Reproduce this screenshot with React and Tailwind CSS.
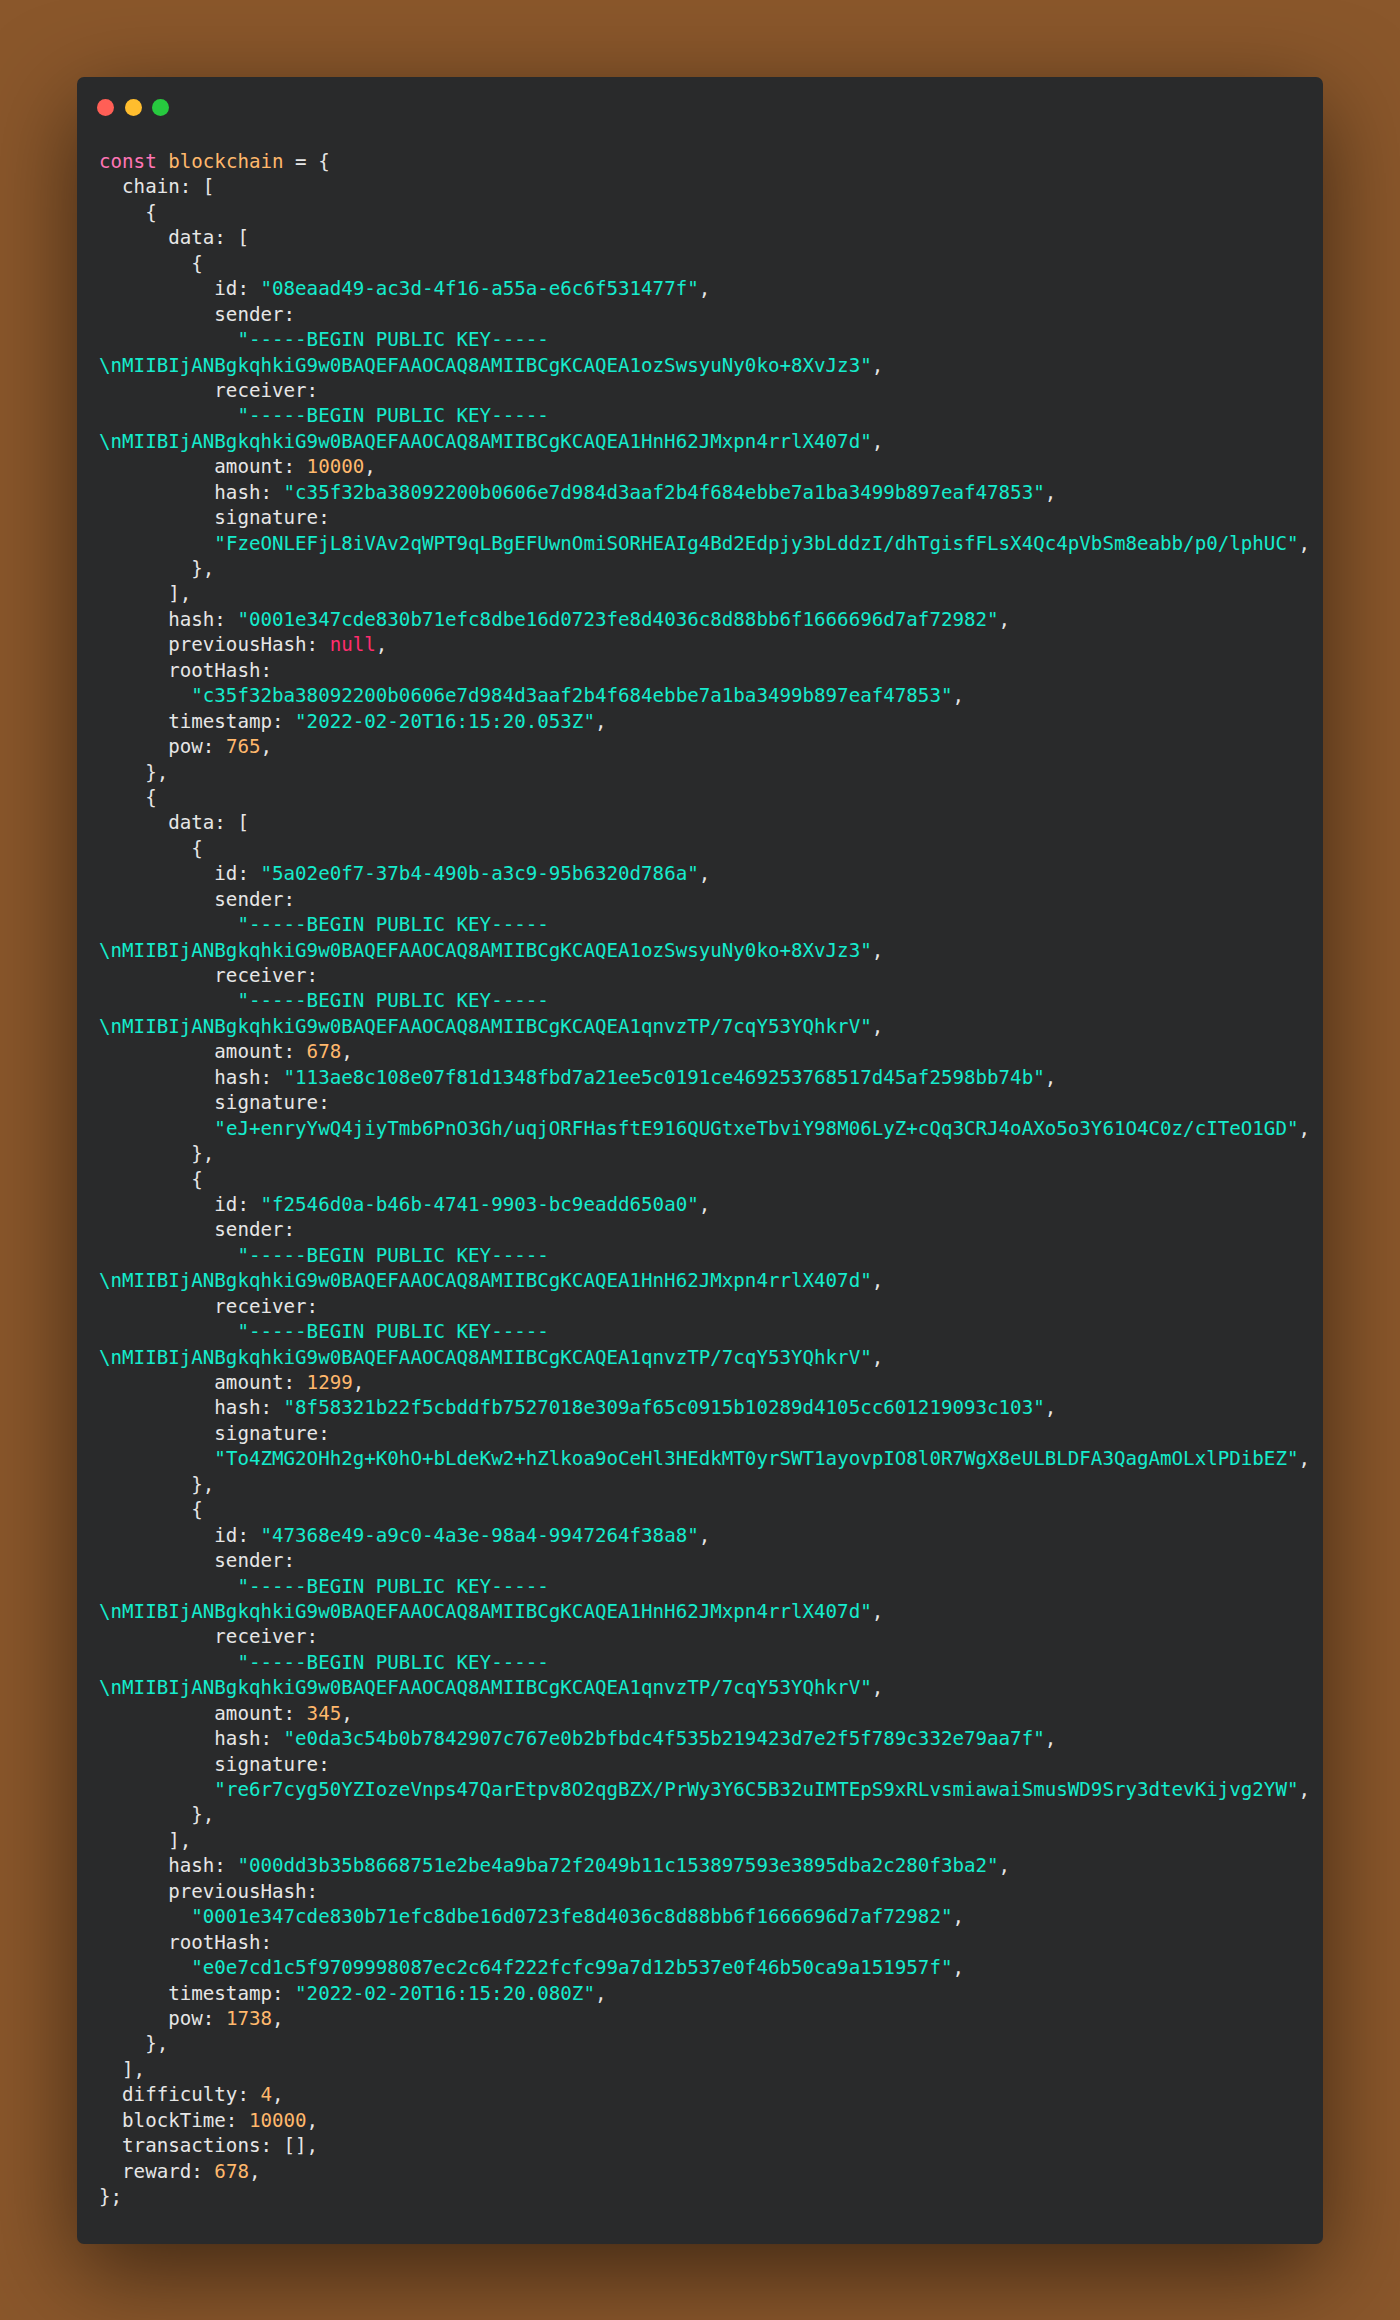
const KEY_A = String.raw`\nMIIBIjANBgkqhkiG9w0BAQEFAAOCAQ8AMIIBCgKCAQEA1ozSwsyuNy0ko+8XvJz3",`
const KEY_B = String.raw`\nMIIBIjANBgkqhkiG9w0BAQEFAAOCAQ8AMIIBCgKCAQEA1HnH62JMxpn4rrlX407d",`
const KEY_C = String.raw`\nMIIBIjANBgkqhkiG9w0BAQEFAAOCAQ8AMIIBCgKCAQEA1qnvzTP/7cqY53YQhkrV",`
const BEGIN = '            "-----BEGIN PUBLIC KEY-----'

const CODE = [
  'const blockchain = {',
  '  chain: [',
  '    {',
  '      data: [',
  '        {',
  '          id: "08eaad49-ac3d-4f16-a55a-e6c6f531477f",',
  '          sender:',
  BEGIN,
  KEY_A,
  '          receiver:',
  BEGIN,
  KEY_B,
  '          amount: 10000,',
  '          hash: "c35f32ba38092200b0606e7d984d3aaf2b4f684ebbe7a1ba3499b897eaf47853",',
  '          signature:',
  '          "FzeONLEFjL8iVAv2qWPT9qLBgEFUwnOmiSORHEAIg4Bd2Edpjy3bLddzI/dhTgisfFLsX4Qc4pVbSm8eabb/p0/lphUC",',
  '        },',
  '      ],',
  '      hash: "0001e347cde830b71efc8dbe16d0723fe8d4036c8d88bb6f1666696d7af72982",',
  '      previousHash: null,',
  '      rootHash:',
  '        "c35f32ba38092200b0606e7d984d3aaf2b4f684ebbe7a1ba3499b897eaf47853",',
  '      timestamp: "2022-02-20T16:15:20.053Z",',
  '      pow: 765,',
  '    },',
  '    {',
  '      data: [',
  '        {',
  '          id: "5a02e0f7-37b4-490b-a3c9-95b6320d786a",',
  '          sender:',
  BEGIN,
  KEY_A,
  '          receiver:',
  BEGIN,
  KEY_C,
  '          amount: 678,',
  '          hash: "113ae8c108e07f81d1348fbd7a21ee5c0191ce469253768517d45af2598bb74b",',
  '          signature:',
  '          "eJ+enryYwQ4jiyTmb6PnO3Gh/uqjORFHasftE916QUGtxeTbviY98M06LyZ+cQq3CRJ4oAXo5o3Y61O4C0z/cITeO1GD",',
  '        },',
  '        {',
  '          id: "f2546d0a-b46b-4741-9903-bc9eadd650a0",',
  '          sender:',
  BEGIN,
  KEY_B,
  '          receiver:',
  BEGIN,
  KEY_C,
  '          amount: 1299,',
  '          hash: "8f58321b22f5cbddfb7527018e309af65c0915b10289d4105cc601219093c103",',
  '          signature:',
  '          "To4ZMG2OHh2g+K0hO+bLdeKw2+hZlkoa9oCeHl3HEdkMT0yrSWT1ayovpIO8l0R7WgX8eULBLDFA3QagAmOLxlPDibEZ",',
  '        },',
  '        {',
  '          id: "47368e49-a9c0-4a3e-98a4-9947264f38a8",',
  '          sender:',
  BEGIN,
  KEY_B,
  '          receiver:',
  BEGIN,
  KEY_C,
  '          amount: 345,',
  '          hash: "e0da3c54b0b7842907c767e0b2bfbdc4f535b219423d7e2f5f789c332e79aa7f",',
  '          signature:',
  '          "re6r7cyg50YZIozeVnps47QarEtpv8O2qgBZX/PrWy3Y6C5B32uIMTEpS9xRLvsmiawaiSmusWD9Sry3dtevKijvg2YW",',
  '        },',
  '      ],',
  '      hash: "000dd3b35b8668751e2be4a9ba72f2049b11c153897593e3895dba2c280f3ba2",',
  '      previousHash:',
  '        "0001e347cde830b71efc8dbe16d0723fe8d4036c8d88bb6f1666696d7af72982",',
  '      rootHash:',
  '        "e0e7cd1c5f9709998087ec2c64f222fcfc99a7d12b537e0f46b50ca9a151957f",',
  '      timestamp: "2022-02-20T16:15:20.080Z",',
  '      pow: 1738,',
  '    },',
  '  ],',
  '  difficulty: 4,',
  '  blockTime: 10000,',
  '  transactions: [],',
  '  reward: 678,',
  '};',
]

const STRING = 'text-[#15eccd]'
const NUMBER = 'text-[#ffb86c]'
const KEYWORD = 'text-[#ff75b5]'
const ATOM = 'text-[#ff2c6d]'

// splits one source line into coloured pieces
function tokenize(line) {
  if (line === 'const blockchain = {') {
    return [
      { text: 'const', cls: KEYWORD },
      { text: ' ' },
      { text: 'blockchain', cls: NUMBER },
      { text: ' = {' },
    ]
  }
  if (line.startsWith('\\n')) {
    const end = line.lastIndexOf('"') + 1
    return [{ text: line.slice(0, end), cls: STRING }, { text: line.slice(end) }]
  }
  const pieces = []
  const re = /"[^"]*"?|\b\d+\b|\bnull\b/g
  let last = 0
  let m
  while ((m = re.exec(line))) {
    if (m.index > last) pieces.push({ text: line.slice(last, m.index) })
    const t = m[0]
    pieces.push({ text: t, cls: t[0] === '"' ? STRING : t === 'null' ? ATOM : NUMBER })
    last = m.index + t.length
  }
  if (last < line.length) pieces.push({ text: line.slice(last) })
  return pieces
}

export default function App() {
  return (
    <div className="w-[1400px] h-[2320px] bg-[#8a572b] pt-[77px] pl-[77px] overflow-hidden">
      <div className="w-[1246px] h-[2167px] bg-[#292a2b] rounded-[7px] shadow-[0_28px_95px_rgba(0,0,0,0.55)]">
        <div className="flex gap-[10.5px] pl-[20px] pt-[22px]">
          <span className="w-[17px] h-[17px] rounded-full bg-[#ff5f56]" />
          <span className="w-[17px] h-[17px] rounded-full bg-[#ffbd2e]" />
          <span className="w-[17px] h-[17px] rounded-full bg-[#27c93f]" />
        </div>
        <pre className="mt-[33px] pl-[22px] font-['DejaVu_Sans_Mono',monospace] text-[19.16px] leading-[25.43px] text-[#e6e6e6]">
          {CODE.map((line, i) => (
            <div key={i}>
              {tokenize(line).map((p, j) => (
                <span key={j} className={p.cls}>{p.text}</span>
              ))}
            </div>
          ))}
        </pre>
      </div>
    </div>
  )
}
